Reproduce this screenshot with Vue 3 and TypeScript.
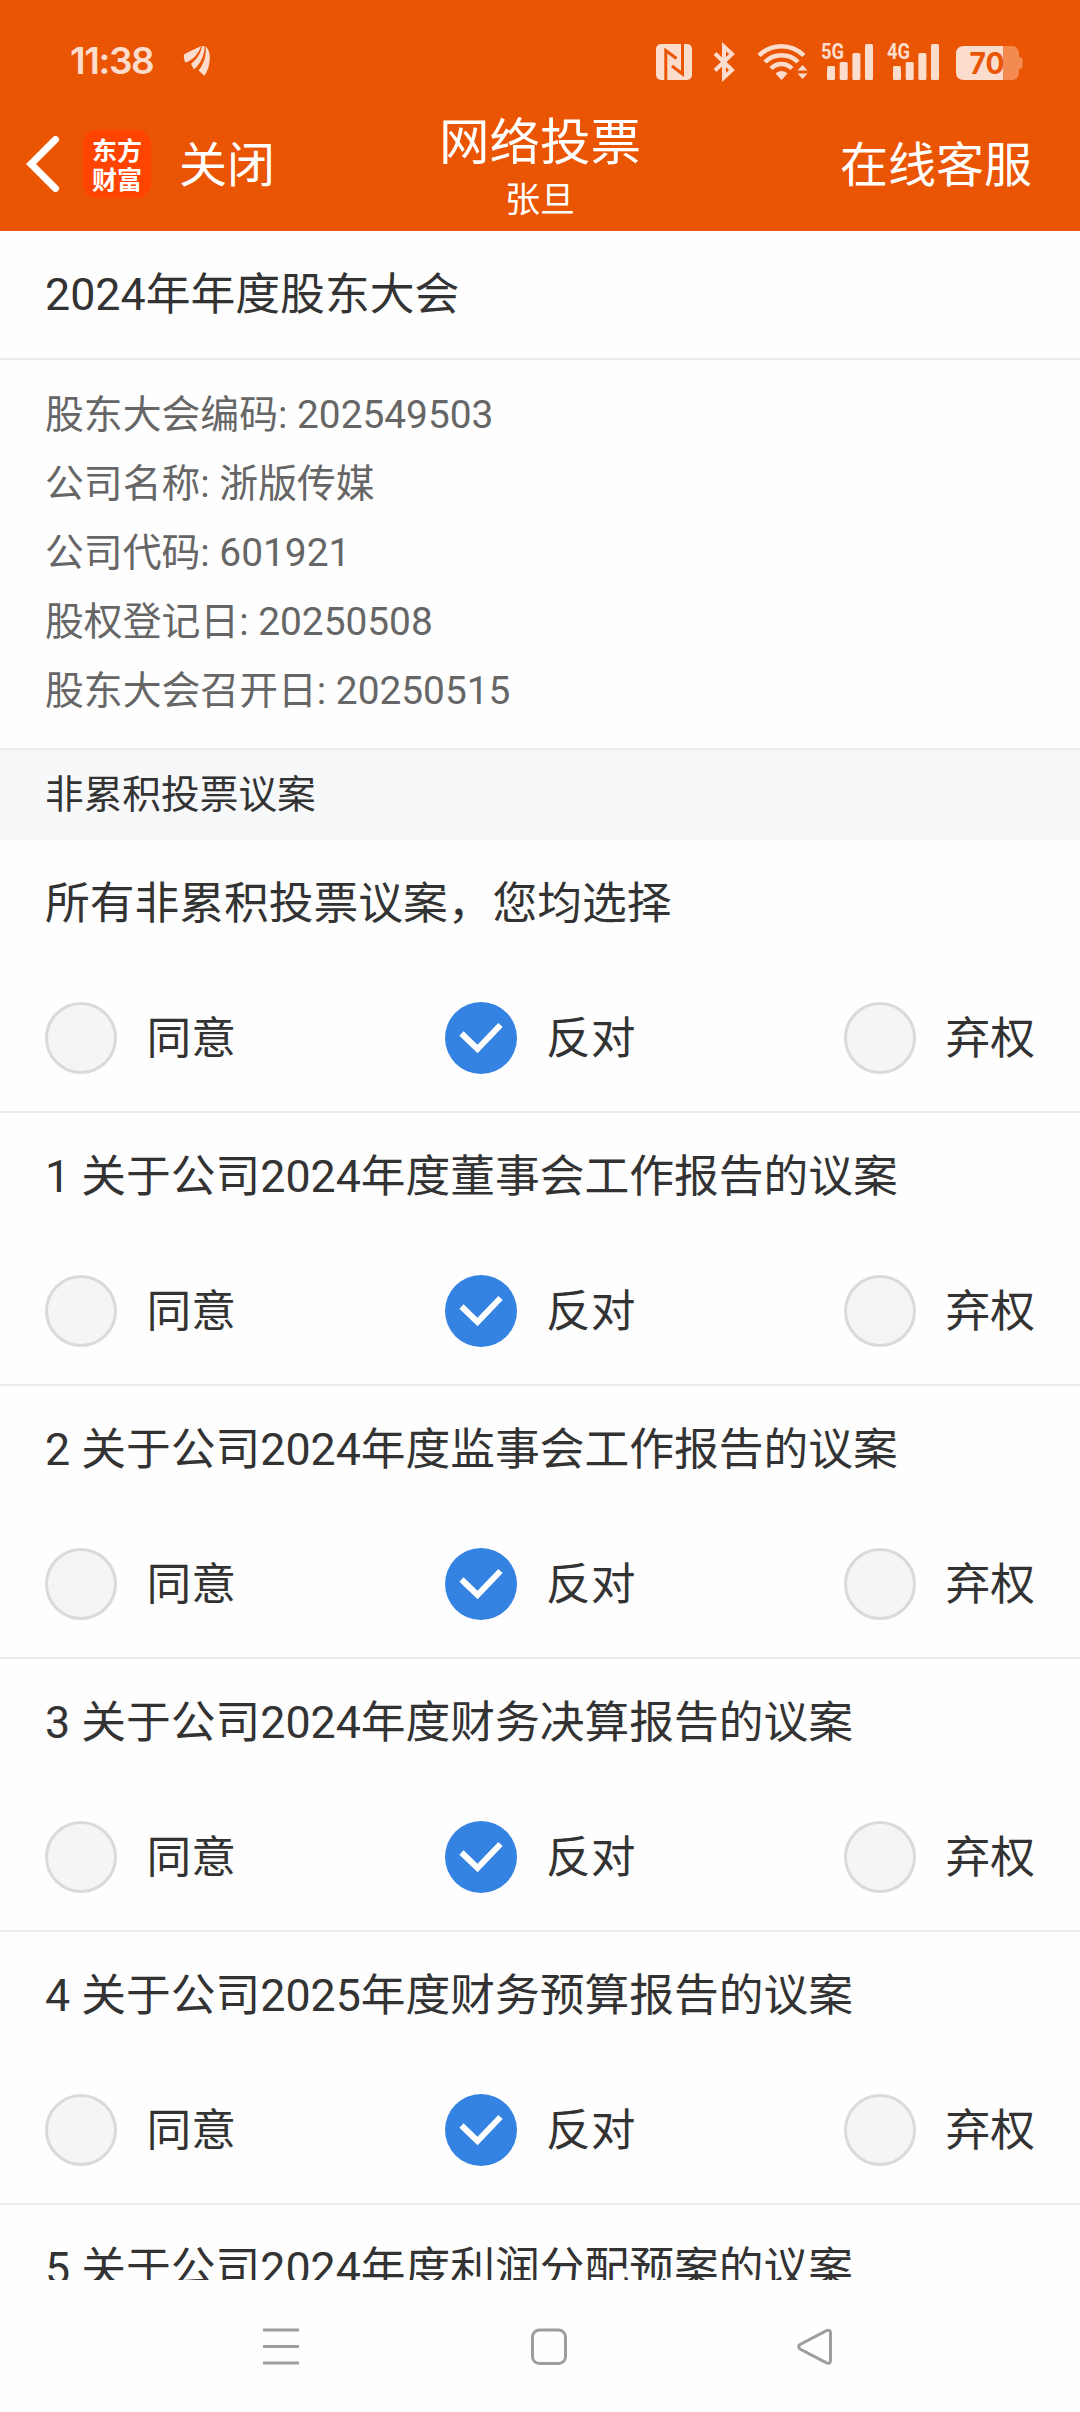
<script setup lang="ts">
import { ref } from 'vue'

interface Proposal {
  title: string
  choice: string
}

const choices: string[] = ['同意', '反对', '弃权']

const info: { label: string; value: string }[] = [
  { label: '股东大会编码', value: '202549503' },
  { label: '公司名称', value: '浙版传媒' },
  { label: '公司代码', value: '601921' },
  { label: '股权登记日', value: '20250508' },
  { label: '股东大会召开日', value: '20250515' },
]

const proposals = ref<Proposal[]>([
  { title: '所有非累积投票议案，您均选择', choice: '反对' },
  { title: '1 关于公司2024年度董事会工作报告的议案', choice: '反对' },
  { title: '2 关于公司2024年度监事会工作报告的议案', choice: '反对' },
  { title: '3 关于公司2024年度财务决算报告的议案', choice: '反对' },
  { title: '4 关于公司2025年度财务预算报告的议案', choice: '反对' },
  { title: '5 关于公司2024年度利润分配预案的议案', choice: '反对' },
])

const networks: string[] = ['5G', '4G']
</script>

<template>
  <div class="screen">
    <header class="header">
      <div class="status">
        <span class="time">11:38</span>
        <svg class="leaf" width="28" height="32" viewBox="0 0 28 32">
          <path d="M1 9.500C6 6 12 4.500 18 1C16 8 10 15.500 2.500 17.500C1 15.500 .5 12 1 9.500Z" />
          <path d="M19 1L21.500 1C22 9 18 18.500 11 24.500L8 19C14 14 18 8 19 1Z" />
          <path d="M22.500 1.500C26.500 4 27.500 11 26.500 17C26 22 24 27 21.500 30.800L15.500 25.500C21.500 18 23.500 10 22.500 1.500Z" />
        </svg>
        <div class="indicators">
          <svg class="nfc" width="36" height="36" viewBox="0 0 36 36">
            <rect width="36" height="36" rx="5" />
            <path class="cut" d="M9.800 36V6.500L20.500 14.500M26.500 0V30L16 22" />
          </svg>
          <svg class="bt" width="22" height="36" viewBox="0 0 22 36">
            <path d="M2 9.500L19 26L11 33.500V2.500L19 10L2 26.500" />
          </svg>
          <svg class="wifi" width="51" height="36" viewBox="0 0 51 36">
            <path class="arc" d="M2 11.500C15 -1 34 -1 47 11.500M8 18C17 9 32 9 41 18M14 24.500C20 18.500 29 18.500 35 24.500" />
            <path d="M18.500 29.500C22 26 27 26 30.500 29.500L24.500 36Z" />
            <path d="M40.500 26.500L45.500 21L50.500 26.500ZM40.500 29.500L45.500 35L50.500 29.500Z" />
          </svg>
          <svg v-for="net in networks" :key="net" class="signal" width="53" height="38" viewBox="0 0 53 38">
            <text x="0" y="16.500" textLength="23" lengthAdjust="spacingAndGlyphs">{{ net }}</text>
            <rect x="6" y="24" width="8" height="14" rx="1.500" />
            <rect x="18.700" y="20" width="8" height="18" rx="1.500" />
            <rect x="31.400" y="11" width="8" height="27" rx="1.500" />
            <rect x="44" y="2" width="8" height="36" rx="1.500" />
          </svg>
          <svg class="battery" width="67" height="34" viewBox="0 0 67 34">
            <path class="rest" d="M47 0H55Q63 0 63 8V11Q66.500 11 66.500 14V20Q66.500 23 63 23V26Q63 34 55 34H47Z" />
            <path d="M8 0H47V34H8Q0 34 0 26V8Q0 0 8 0Z" />
            <text x="13.500" y="28" textLength="35" lengthAdjust="spacingAndGlyphs">70</text>
          </svg>
        </div>
      </div>
      <nav class="nav">
        <div class="side start">
          <svg class="back" width="34" height="56" viewBox="0 0 34 56">
            <path d="M29.500 3.500L5 28L29.500 52.500" />
          </svg>
          <span class="logo"><span>东方</span><span>财富</span></span>
          <span class="action">关闭</span>
        </div>
        <div class="heading">
          <span class="heading-title">网络投票</span>
          <span class="heading-name">张旦</span>
        </div>
        <div class="side end"><span class="action">在线客服</span></div>
      </nav>
    </header>

    <main class="content">
      <h1 class="meeting">2024年年度股东大会</h1>
      <div class="info">
        <p v-for="row in info" :key="row.label">{{ row.label }}: {{ row.value }}</p>
      </div>
      <h2 class="section">非累积投票议案</h2>
      <section v-for="item in proposals" :key="item.title" class="proposal">
        <h3>{{ item.title }}</h3>
        <div class="options">
          <div v-for="c in choices" :key="c" class="option" @click="item.choice = c">
            <span class="radio" :class="{ checked: item.choice === c }">
              <svg v-if="item.choice === c" width="44" height="32" viewBox="0 0 44 32">
                <path d="M2.500 11.500L18.500 27L41.500 3" />
              </svg>
            </span>
            <span class="label">{{ c }}</span>
          </div>
        </div>
      </section>
    </main>

    <footer class="system">
      <svg width="36" height="37" viewBox="0 0 36 37">
        <path d="M0 2H36M0 18.500H36M0 35H36" />
      </svg>
      <svg class="home" width="36" height="37" viewBox="0 0 36 37">
        <rect x="1.500" y="2" width="33" height="33.500" rx="7" />
      </svg>
      <svg width="36" height="37" viewBox="0 0 36 37">
        <path d="M3 16.500L29 2.800Q33.500 1 33.500 5V32.500Q33.500 36.500 29 34.700L3 21Q.5 18.700 3 16.500Z" />
      </svg>
    </footer>
  </div>
</template>

<style>
body {
  margin: 0;
  background: #fff;
}
</style>

<style scoped>
.screen {
  display: flex;
  flex-direction: column;
  width: 1080px;
  height: 2412px;
  overflow: hidden;
  background: #fefefe;
  color: #333;
  font-family: Roboto, "Noto Sans CJK SC", sans-serif;
}

h1,
h2,
h3,
p {
  margin: 0;
  font-weight: 400;
}

.header {
  flex: none;
  display: flex;
  flex-direction: column;
  height: 231px;
  background: #ea5504;
  color: #fff;
}

.status {
  flex: none;
  display: flex;
  align-items: center;
  height: 109px;
  padding: 13px 57px 0 70px;
  box-sizing: border-box;
}

.status svg {
  display: block;
  overflow: visible;
  fill: #fcdccc;
}

.time {
  width: 113px;
  color: #fcdccc;
  font: 600 37px/44px Inter, sans-serif;
  letter-spacing: -1.4px;
}

.indicators {
  display: flex;
  align-items: flex-end;
  margin-left: auto;
}

.nfc .cut {
  fill: none;
  stroke: #ea5504;
  stroke-width: 3;
}

.status .bt {
  margin-left: 21px;
  fill: none;
  stroke: #fcdccc;
  stroke-width: 4;
}

.wifi {
  margin-left: 22px;
}

.wifi .arc {
  fill: none;
  stroke: #fcdccc;
  stroke-width: 4.5;
}

.signal {
  margin-left: 13px;
}

.signal text {
  font: 700 22px Roboto, sans-serif;
}

.battery {
  margin-left: 16px;
}

.battery .rest {
  fill: #f38b50;
}

.battery text {
  fill: #ea5504;
  font: 700 30px Inter, sans-serif;
}

.nav {
  display: flex;
  height: 122px;
  padding: 0 48px 0 26px;
}

.side {
  display: flex;
  align-items: center;
  width: 340px;
  height: 110px;
}

.side.start {
  width: 362px;
}

.side.end {
  justify-content: flex-end;
}

.back path {
  fill: none;
  stroke: #fff;
  stroke-width: 7;
  stroke-linecap: round;
}

.logo {
  display: flex;
  flex-direction: column;
  align-items: center;
  justify-content: center;
  width: 68px;
  height: 68px;
  margin: 0 28px 0 23px;
  border-radius: 14px;
  background: #ff4400;
  font: 700 25px/29px "Noto Sans CJK SC", sans-serif;
}

.action {
  padding-top: 4px;
  font-size: 48px;
  line-height: 60px;
}

.heading {
  display: flex;
  flex-direction: column;
  align-items: center;
  flex: 1;
  padding-top: 1px;
}

.heading-title {
  font-size: 50.5px;
  line-height: 66px;
}

.heading-name {
  font-size: 35px;
  line-height: 50px;
}

.content {
  flex: none;
  height: 2049px;
  overflow: hidden;
}

.meeting {
  padding: 0 45px;
  border-bottom: 2px solid #ececec;
  font-size: 44.8px;
  line-height: 127px;
}

.info {
  padding: 20px 45px 23px;
  border-bottom: 2px solid #ececec;
  color: #666;
  font-size: 38.85px;
  line-height: 69px;
}

.section {
  padding: 0 45px;
  background: #f7f8fa;
  font-size: 38.7px;
  line-height: 90px;
}

.proposal {
  height: 271px;
  border-bottom: 2px solid #ececec;
  font-size: 44.75px;
}

.proposal h3 {
  padding: 32px 45px 0;
  font-size: inherit;
  line-height: 64px;
  white-space: nowrap;
}

.options {
  display: flex;
  justify-content: space-between;
  margin-top: 66px;
  padding: 0 45px;
}

.option {
  display: flex;
  gap: 29.5px;
  height: 72px;
}

.label {
  line-height: 74px;
}

.radio {
  display: flex;
  align-items: center;
  justify-content: center;
  box-sizing: border-box;
  width: 72px;
  height: 72px;
  border: 3px solid #dadada;
  border-radius: 50%;
  background: #f5f5f5;
}

.radio.checked {
  border: none;
  background: #3482e1;
}

.radio path {
  fill: none;
  stroke: #fff;
  stroke-width: 6;
}

.system {
  display: flex;
  align-items: center;
  flex: 1;
  padding-left: 263px;
}

.system .home {
  margin: 0 230px 0 232px;
}

.system svg {
  fill: none;
  stroke: #9e9e9e;
  stroke-width: 3;
}
</style>
